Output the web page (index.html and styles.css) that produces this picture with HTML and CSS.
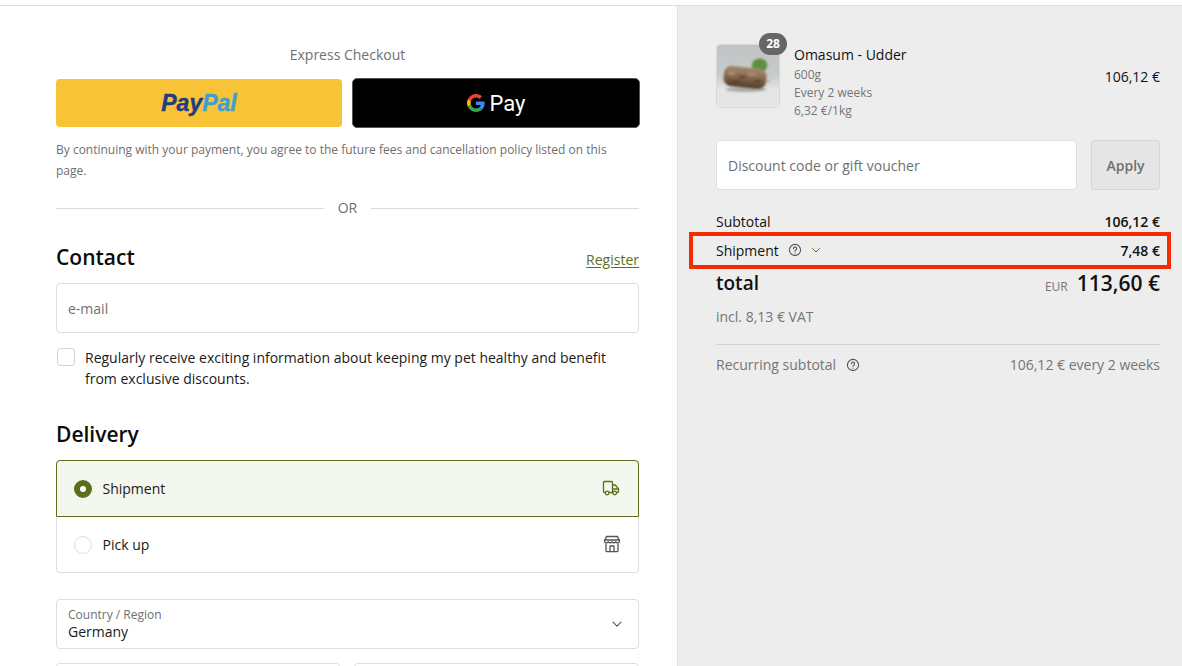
FILE: index.html
```html
<!DOCTYPE html>
<html lang="en">
<head>
<meta charset="utf-8">
<title>Checkout</title>
<link rel="stylesheet" href="styles.css">
</head>
<body>
<div class="page">
  <main class="left">
    <p class="express-title">Express Checkout</p>
    <div class="express-buttons">
      <div class="pay-btn paypal"><span class="pp-a">Pay</span><span class="pp-b">Pal</span></div>
      <div class="pay-btn gpay">
        <svg class="g-logo" viewBox="0 0 48 48" width="18" height="18">
          <path fill="#EA4335" d="M24 9.500c3.500 0 6.700 1.200 9.200 3.600l6.900-6.900C35.900 2.400 30.500 0 24 0 14.600 0 6.500 5.400 2.600 13.200l8 6.200C12.500 13.700 17.800 9.500 24 9.500z"/>
          <path fill="#4285F4" d="M46.900 24.500c0-1.600-.1-3.100-.4-4.500H24v9h12.900c-.6 3-2.200 5.500-4.700 7.200l7.700 6c4.500-4.200 7-10.300 7-17.700z"/>
          <path fill="#FBBC05" d="M10.500 28.600c-.5-1.400-.8-3-.8-4.600s.3-3.200.8-4.600l-8-6.200C.9 16.500 0 20.100 0 24s.9 7.500 2.600 10.800l7.900-6.200z"/>
          <path fill="#34A853" d="M24 48c6.500 0 11.900-2.100 15.900-5.800l-7.700-6c-2.200 1.400-4.900 2.300-8.200 2.300-6.200 0-11.500-4.200-13.400-9.900l-8 6.200C6.500 42.600 14.600 48 24 48z"/>
        </svg>
        <span class="g-text">Pay</span>
      </div>
    </div>
    <p class="legal">By continuing with your payment, you agree to the future fees and cancellation policy listed on this page.</p>
    <div class="divider"><span>OR</span></div>

    <div class="section-head contact-head">
      <h2>Contact</h2>
      <a class="register" href="#">Register</a>
    </div>
    <div class="field email">e-mail</div>
    <div class="check-row">
      <span class="checkbox"></span>
      <span class="check-text">Regularly receive exciting information about keeping my pet healthy and benefit from exclusive discounts.</span>
    </div>

    <h2 class="delivery-head">Delivery</h2>
    <div class="delivery-box">
      <div class="option selected">
        <span class="radio on"></span>
        <span class="option-label">Shipment</span>
        <svg class="option-icon" viewBox="0 0 18 18" width="18" height="18" fill="none" stroke="#5c6f1e" stroke-width="1.300" stroke-linejoin="round" stroke-linecap="round">
          <path d="M3.200 13.500H2.500a1 1 0 0 1-1-1V3.500a1 1 0 0 1 1-1h7a1 1 0 0 1 1 1v10H7.300"/>
          <path d="M10.500 6h2.800l3.200 3.800v2.700a1 1 0 0 1-1 1h-.700"/>
          <path d="M10.500 10h6"/>
          <circle cx="5.200" cy="14" r="1.800"/>
          <circle cx="12.700" cy="14" r="1.800"/>
        </svg>
      </div>
      <div class="option">
        <span class="radio"></span>
        <span class="option-label">Pick up</span>
        <svg class="option-icon" viewBox="0 0 18 18" width="18" height="18" fill="none" stroke="#555" stroke-width="1.300" stroke-linejoin="round" stroke-linecap="round">
          <path d="M3.500 1.500h11l2 4.500a2 2 0 0 1-3.800.8 2.300 2.300 0 0 1-3.700 0 2.300 2.300 0 0 1-3.700 0 2 2 0 0 1-3.800-.8z"/>
          <path d="M1.500 5h15"/>
          <path d="M3 8.800v7a.8.800 0 0 0 .8.800h10.400a.8.800 0 0 0 .8-.8v-7"/>
          <path d="M7 16.500V11h4v5.500"/>
        </svg>
      </div>
    </div>

    <div class="field select">
      <div>
        <div class="select-label">Country / Region</div>
        <div class="select-value">Germany</div>
      </div>
      <svg viewBox="0 0 12 12" width="12" height="12" fill="none" stroke="#555" stroke-width="1.100" stroke-linecap="round" stroke-linejoin="round"><path d="M2 4.200l4 4 4-4"/></svg>
    </div>
    <div class="name-row">
      <div class="field half"></div>
      <div class="field half"></div>
    </div>
  </main>

  <aside class="right">
    <div class="product">
      <div class="thumb">
        <svg viewBox="0 0 64 64" width="64" height="64" class="photo">
          <defs>
            <linearGradient id="bg" x1="0" y1="0" x2="0" y2="1">
              <stop offset="0" stop-color="#bfc3c4"/>
              <stop offset=".5" stop-color="#c9cccc"/>
              <stop offset=".72" stop-color="#e4e5e4"/>
              <stop offset="1" stop-color="#e6e6e4"/>
            </linearGradient>
            <linearGradient id="roll" x1="0" y1="0" x2="0" y2="1">
              <stop offset="0" stop-color="#a58a6e"/>
              <stop offset=".5" stop-color="#876850"/>
              <stop offset="1" stop-color="#4f3a28"/>
            </linearGradient>
            <filter id="soft"><feGaussianBlur stdDeviation="1"/></filter>
          </defs>
          <rect width="64" height="64" fill="url(#bg)"/>
          <g filter="url(#soft)">
            <ellipse cx="44" cy="21" rx="8" ry="7" fill="#5f8f3e"/>
            <ellipse cx="30" cy="46" rx="21" ry="2.500" fill="#a9aaa6"/>
            <rect x="7" y="23" width="44" height="21" rx="8" fill="url(#roll)" transform="rotate(6 29 33)"/>
            <ellipse cx="15" cy="29" rx="4" ry="2" fill="#a98c70"/>
            <ellipse cx="26" cy="33" rx="4" ry="2" fill="#6c5139"/>
            <ellipse cx="36" cy="30" rx="5" ry="2" fill="#a68a6c"/>
            <ellipse cx="42" cy="37" rx="4" ry="2" fill="#634a34"/>
            <ellipse cx="20" cy="38" rx="5" ry="2" fill="#5e452f"/>
            <path d="M50 37l4 .5" stroke="#6d8a3a" stroke-width="1"/>
          </g>
        </svg>
        <span class="badge">28</span>
      </div>
      <div class="product-info">
        <div class="product-name">Omasum - Udder</div>
        <div class="meta">600g</div>
        <div class="meta">Every 2 weeks</div>
        <div class="meta">6,32 €/1kg</div>
      </div>
      <div class="product-price">106,12 €</div>
    </div>

    <div class="discount">
      <div class="discount-input">Discount code or gift voucher</div>
      <div class="apply">Apply</div>
    </div>

    <div class="line subtotal">
      <span>Subtotal</span><strong>106,12 €</strong>
    </div>
    <div class="line shipment">
      <span class="with-icons">Shipment
        <svg class="help" viewBox="0 0 14 14" width="14" height="14" fill="none" stroke="#555" stroke-width="1.100" stroke-linecap="round"><circle cx="7" cy="7" r="5.600"/><path d="M5.400 5.700a1.600 1.600 0 1 1 2.400 1.400c-.5.300-.8.600-.8 1.100"/><path d="M7 10.100v.1"/></svg>
        <svg class="chev" viewBox="0 0 12 12" width="12" height="12" fill="none" stroke="#5c6f1e" stroke-width="1" stroke-linecap="round" stroke-linejoin="round"><path d="M2.500 4.500L6 8l3.500-3.500"/></svg>
      </span>
      <strong>7,48 €</strong>
    </div>
    <div class="line total">
      <span class="total-label">total</span>
      <span class="total-value"><small>EUR</small><b>113,60 €</b></span>
    </div>
    <div class="vat">incl. 8,13 € VAT</div>
    <div class="line recurring">
      <span class="with-icons">Recurring subtotal
        <svg class="help-r" viewBox="0 0 14 14" width="14" height="14" fill="none" stroke="#555" stroke-width="1.100" stroke-linecap="round"><circle cx="7" cy="7" r="5.600"/><path d="M5.400 5.700a1.600 1.600 0 1 1 2.400 1.400c-.5.300-.8.600-.8 1.100"/><path d="M7 10.100v.1"/></svg>
      </span>
      <span>106,12 € every 2 weeks</span>
    </div>
  </aside>
</div>
</body>
</html>
```
FILE: styles.css
```css
* { box-sizing: border-box; }
html, body { margin: 0; height: 100%; overflow: hidden; }
body {
  background: #fff;
  font-family: "Open Sans", "Noto Sans", sans-serif;
  font-size: 14px;
  color: #111;
  padding-top: 5px;
}
.page {
  display: flex;
  height: 661px;
  overflow: hidden;
  border-top: 1px solid #dedede;
}
.left {
  width: 677px;
  flex: none;
  padding: 0 38px 0 56px;
}
.right {
  flex: 1;
  background: #ededed;
  border-left: 1px solid #e0e0e0;
  padding: 38px 22px 0 38px;
}
p, h2 { margin: 0; }

.express-title {
  margin-top: 39px;
  line-height: 20px;
  text-align: center;
  color: #707070;
  font-size: 14px;
}
.express-buttons {
  display: grid;
  grid-template-columns: 286px 288px;
  gap: 10px;
  margin-top: 14px;
  width: 584px;
}
.pay-btn {
  height: 48px;
  border-radius: 4px;
  display: flex;
  align-items: center;
  justify-content: center;
}
.paypal {
  background: #f9c337;
  font-family: "Liberation Sans", sans-serif;
  font-style: italic;
  font-weight: 700;
  font-size: 23px;
  letter-spacing: 0;
  -webkit-text-stroke: .4px currentColor;
}
.pp-a { color: #253b80; }
.pp-b { color: #3d9fd3; }
.gpay {
  background: #000;
  border: 1px solid #555;
  gap: 5px;
  height: 50px;
  margin-top: -1px;
  border-radius: 5px;
}
.g-text {
  color: #fff;
  font-family: "Roboto", sans-serif;
  font-weight: 400;
  font-size: 22px;
  line-height: 1;
  margin-top: 2px;
}
.legal {
  margin-top: 11px;
  font-size: 12px;
  line-height: 21px;
  color: #6f6f6f;
  width: 583px;
}
.divider {
  width: 583px;
  display: flex;
  align-items: center;
  gap: 14px;
  margin-top: 17px;
  color: #707070;
  font-size: 14px;
  line-height: 20px;
}
.divider::before, .divider::after {
  content: "";
  flex: 1;
  height: 1px;
  background: #dcdcdc;
}

.section-head {
  width: 583px;
  display: flex;
  justify-content: space-between;
  align-items: center;
}
.contact-head { margin-top: 24px; }
h2 {
  font-size: 21px;
  font-weight: 600;
  line-height: 30px;
  color: #0c0c0c;
}
.register {
  color: #5c6f1e;
  font-size: 14px;
  margin-top: 4px;
  text-underline-offset: 2px;
}
.field {
  width: 583px;
  background: #fff;
  border: 1px solid #dedede;
  border-radius: 4px;
}
.email {
  height: 50px;
  margin-top: 11px;
  padding: 0 11px;
  line-height: 50px;
  color: #6f6f6f;
}
.check-row {
  display: flex;
  gap: 10px;
  margin-top: 14px;
  margin-left: 1px;
  width: 570px;
}
.checkbox {
  flex: none;
  width: 18px;
  height: 18px;
  margin-top: 1px;
  border: 1px solid #d4d4d4;
  border-radius: 3px;
}
.check-text { line-height: 21px; color: #1a1a1a; }
.delivery-head { margin-top: 30px; }
.delivery-box {
  width: 583px;
  margin-top: 11px;
  border: 1px solid #dedede;
  border-top: 0;
  border-radius: 4px;
}
.option {
  display: flex;
  align-items: center;
  height: 55px;
  padding: 0 17px;
}
.option.selected {
  height: 57px;
  margin: 0 -1px;
  padding: 0 18px 0 17px;
  background: #f3f7ed;
  border: 1px solid #5c6f1e;
  border-radius: 4px 4px 0 0;
}
.radio {
  width: 18px;
  height: 18px;
  border-radius: 50%;
  border: 1px solid #dedede;
  background: #fff;
  margin-right: 10.500px;
  flex: none;
}
.radio.on { border: 6px solid #5c6f1e; }
.option-label { flex: 1; color: #1a1a1a; }
.option-icon { flex: none; margin-bottom: 2px; }
.select {
  height: 50px;
  margin-top: 26px;
  padding: 0 15px 0 11px;
  display: flex;
  align-items: center;
  justify-content: space-between;
}
.select-label { font-size: 12px; line-height: 16px; color: #6f6f6f; }
.select-value { line-height: 18px; color: #1a1a1a; }
.name-row {
  display: grid;
  grid-template-columns: 284px 285px;
  gap: 14px;
  width: 583px;
  margin-top: 14px;
}
.half { width: auto; height: 50px; }

.product { display: flex; }
.thumb {
  position: relative;
  width: 64px;
  height: 64px;
  flex: none;
}
.photo {
  display: block;
  border-radius: 4px;
  border: 1px solid #d8d8d8;
}
.badge {
  position: absolute;
  top: -11px;
  right: -7px;
  width: 28px;
  height: 22px;
  border-radius: 11px;
  background: #666;
  color: #fff;
  font-size: 12px;
  font-weight: 700;
  line-height: 22px;
  text-align: center;
}
.product-info { margin-left: 14px; flex: 1; }
.product-name { font-size: 14px; line-height: 22px; color: #111; }
.meta { font-size: 12px; line-height: 18px; color: #757575; }
.product-price { margin-top: 22px; line-height: 22px; color: #111; }
.discount {
  display: flex;
  gap: 14px;
  margin-top: 20px;
}
.discount-input {
  flex: 1;
  height: 50px;
  padding: 0 11px;
  line-height: 50px;
  background: #fff;
  border: 1px solid #dedede;
  border-radius: 4px;
  color: #6f6f6f;
}
.apply {
  width: 69px;
  height: 50px;
  line-height: 50px;
  text-align: center;
  background: #e5e5e5;
  border: 1px solid #d4d4d4;
  border-radius: 4px;
  color: #707070;
  font-weight: 600;
}
.line {
  display: flex;
  justify-content: space-between;
  align-items: center;
}
.line strong { font-weight: 600; font-size: 14px; color: #111; }
.subtotal { margin-top: 22px; line-height: 20px; }
.shipment {
  margin: 0 -11px 0 -27px;
  height: 37px;
  padding: 0 7px 1px 23px;
  border: 4px solid #f42c04;
}
.with-icons { display: inline-flex; align-items: center; }
.help { margin-left: 9px; }
.chev { margin-left: 8px; }
.help-r { margin-left: 10px; }
.total { height: 28px; }
.total-label { font-size: 19px; font-weight: 600; color: #111; }
.total-value { display: inline-flex; align-items: baseline; gap: 9px; }
.total-value small { font-size: 12px; color: #757575; }
.total-value b { font-size: 21px; font-weight: 600; color: #111; }
.vat {
  margin-top: 10px;
  line-height: 20px;
  color: #757575;
  padding-bottom: 17px;
  border-bottom: 1px solid #d2d2d2;
}
.recurring { margin-top: 10px; line-height: 20px; color: #757575; }
```
